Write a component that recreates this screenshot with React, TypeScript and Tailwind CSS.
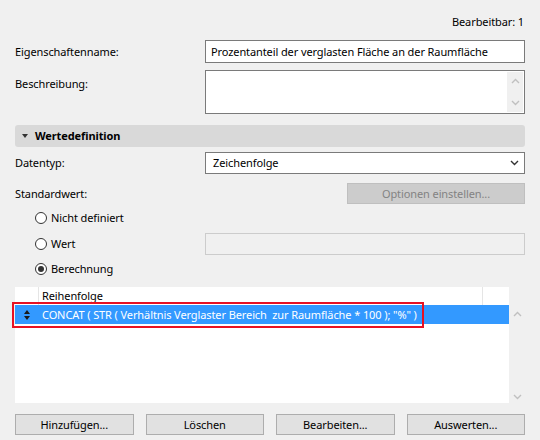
import React from "react";

function Chevron({ dir, className }: { dir: "up" | "down"; className?: string }) {
  return (
    <svg width="9" height="6" viewBox="0 0 9 6" className={className}>
      <path
        d={dir === "up" ? "M1 5 L4.5 1.5 L8 5" : "M1 1 L4.5 4.5 L8 1"}
        fill="none"
        stroke="currentColor"
        strokeWidth="1.4"
      />
    </svg>
  );
}

function Radio({ checked, label }: { checked?: boolean; label: string }) {
  return (
    <label className="flex items-center gap-[4px] ml-[20px]">
      <span className="w-[12px] h-[12px] rounded-full border border-[#333] bg-white flex items-center justify-center">
        {checked && <span className="w-[6px] h-[6px] rounded-full bg-[#333]" />}
      </span>
      <span>{label}</span>
    </label>
  );
}

function Button({ children }: { children: React.ReactNode }) {
  return (
    <button className="h-[21px] bg-[#e1e1e1] border border-[#adadad] text-black flex items-center justify-center">
      {children}
    </button>
  );
}

export default function App() {
  return (
    <div className="w-[540px] h-[440px] bg-[#f0f0f0] px-[15px] pt-[14px] text-[11px] leading-[16px] tracking-[-0.1px] text-black font-['Noto_Sans',sans-serif] overflow-hidden">
      <div className="h-[16px] text-right pr-[1px]">Bearbeitbar: 1</div>

      <div className="mt-[10px] flex items-center h-[23px]">
        <div className="w-[190px]">Eigenschaftenname:</div>
        <div className="flex-1 h-full bg-white border border-[#7a7a7a] flex items-center px-[5px] whitespace-nowrap overflow-hidden">
          Prozentanteil der verglasten Fläche an der Raumfläche
        </div>
      </div>

      <div className="mt-[7px] flex h-[44px]">
        <div className="w-[190px] pt-[6px]">Beschreibung:</div>
        <div className="flex-1 h-full bg-white border border-[#7a7a7a] flex justify-end p-[1px]">
          <div className="w-[16px] bg-[#f0f0f0] flex flex-col items-center justify-between py-[6px] text-[#c0c0c0]">
            <Chevron dir="up" />
            <Chevron dir="down" />
          </div>
        </div>
      </div>

      <div className="mt-[11px] h-[22px] bg-[#d9d9d9] rounded-[3px] flex items-center pl-[7px] gap-[7px] font-bold">
        <svg width="6" height="4" viewBox="0 0 6 4">
          <path d="M0 0 H6 L3 4 Z" fill="#333" />
        </svg>
        <span>Wertedefinition</span>
      </div>

      <div className="mt-[5px] flex items-center h-[22px]">
        <div className="w-[190px]">Datentyp:</div>
        <div className="flex-1 h-full bg-white border border-[#7a7a7a] flex items-center justify-between pl-[7px] pr-[5px]">
          <span>Zeichenfolge</span>
          <Chevron dir="down" className="text-[#333]" />
        </div>
      </div>

      <div className="mt-[9px] flex items-center h-[21px]">
        <div className="flex-1">Standardwert:</div>
        <div className="w-[178px] h-full bg-[#cccccc] border border-[#bfbfbf] text-[#838383] flex items-center justify-center">
          Optionen einstellen...
        </div>
      </div>

      <div className="mt-[4px] h-[20px] flex items-center">
        <Radio label="Nicht definiert" />
      </div>

      <div className="mt-[5px] h-[22px] flex items-center">
        <div className="w-[190px]">
          <Radio label="Wert" />
        </div>
        <div className="flex-1 h-full border border-[#cccccc] bg-[#f0f0f0]" />
      </div>

      <div className="mt-[4px] h-[20px] flex items-center">
        <Radio checked label="Berechnung" />
      </div>

      <div className="relative mt-[8px] h-[116px] flex">
        <div className="flex-1 bg-white flex flex-col">
          <div className="h-[18px] flex">
            <div className="w-[24px] border-r border-[#e5e5e5]" />
            <div className="flex-1 pl-[3px] flex items-center border-r border-[#e5e5e5]">Reihenfolge</div>
            <div className="w-[26px]" />
          </div>
          <div className="h-[19px] bg-[#3399ff] text-white flex items-center">
            <div className="w-[27px] flex justify-center pr-[3px]">
              <svg width="6" height="10" viewBox="0 0 6 10">
                <path d="M3 0 L6 4 H0 Z M0 6 H6 L3 10 Z" fill="#1a1a1a" />
              </svg>
            </div>
            <span className="whitespace-pre">CONCAT ( STR ( Verhältnis Verglaster Bereich  zur Raumfläche * 100 ); "%" )</span>
          </div>
        </div>
        <div className="w-[16px] flex flex-col items-center justify-between pt-[24px] pb-[3px] text-[#c0c0c0]">
          <Chevron dir="up" />
          <Chevron dir="down" />
        </div>
        <div className="absolute left-[-3px] top-[15px] w-[412px] h-[26px] border-2 border-[#e81123]" />
      </div>

      <div className="mt-[11px] grid grid-cols-4 gap-[12px]">
        <Button>Hinzufügen...</Button>
        <Button>Löschen</Button>
        <Button>Bearbeiten...</Button>
        <Button>Auswerten...</Button>
      </div>
    </div>
  );
}
